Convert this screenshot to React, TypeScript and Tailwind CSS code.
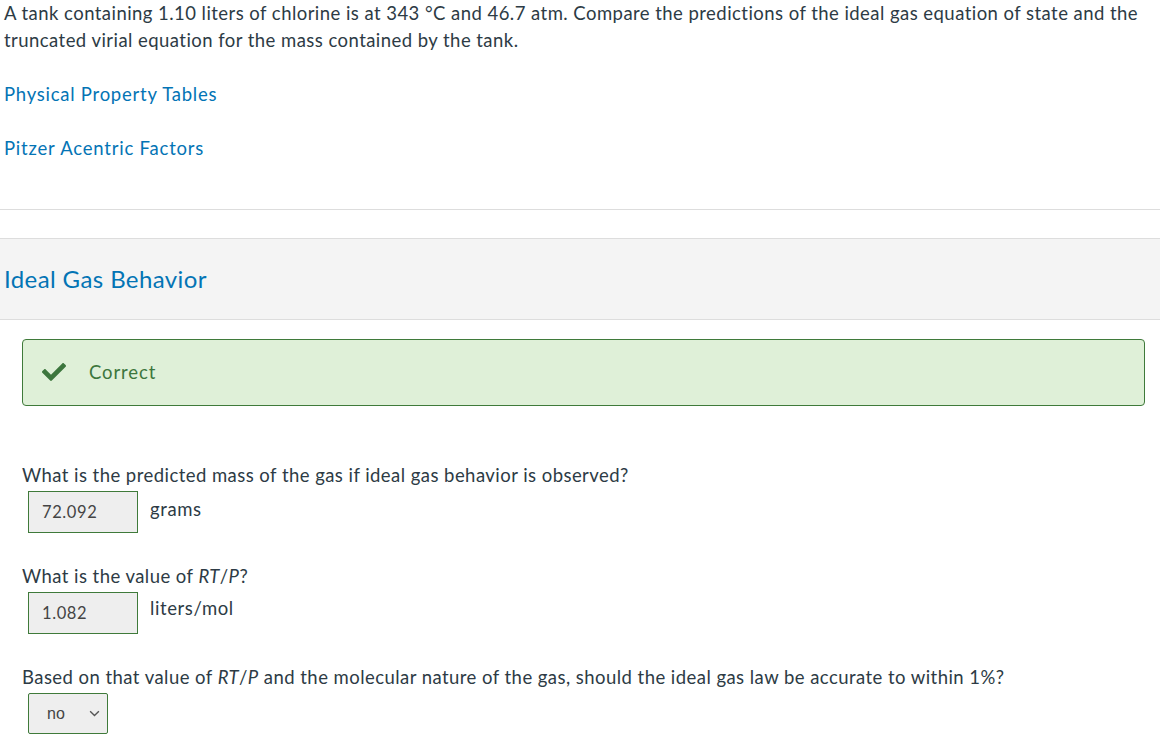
const checkPath =
  'M173.898 439.404l-166.4-166.4c-9.997-9.997-9.997-26.206 0-36.204l36.203-36.204c9.997-9.998 26.207-9.998 36.204 0L192 312.69 432.095 72.596c9.997-9.997 26.207-9.997 36.204 0l36.203 36.204c9.997 9.997 9.997 26.206 0 36.204l-294.4 294.401c-9.998 9.997-26.207 9.997-36.204-.001z';

function AnswerBox({ value }: { value: string }) {
  return (
    <div className="w-[110px] h-[42px] bg-[#eeeeee] border border-[#3f7a3a] flex items-center pl-[13px] text-[16.5px] tracking-[0.6px] text-[#444] font-['Lato']">
      {value}
    </div>
  );
}

export default function App() {
  return (
    <div className="bg-white min-h-[750px] w-[1160px] text-[#2d3b45] text-[18.5px] tracking-[0.45px] font-['Lato','Open_Sans',sans-serif]">
      <p className="pl-[4px] leading-[27px]">
        A tank containing 1.10 liters of chlorine is at 343 °C and 46.7 atm. Compare the predictions of the ideal gas equation of state and the truncated virial equation for the mass contained by the tank.
      </p>

      <a className="block mt-[27px] pl-[4px] leading-[27px] tracking-[0.75px] text-[#0374b5]">
        Physical Property Tables
      </a>
      <a className="block mt-[27px] pl-[4px] leading-[27px] tracking-[0.8px] text-[#0374b5]">
        Pitzer Acentric Factors
      </a>

      <div className="mt-[47px] border-t border-[#dddddd]" />

      <div className="mt-[28px] h-[82px] bg-[#f4f4f4] border-y border-[#dddddd] flex items-center pl-[4px]">
        <h2 className="text-[24px] tracking-[0.4px] text-[#0374b5] leading-[30px]">Ideal Gas Behavior</h2>
      </div>

      <div className="ml-[22px] mt-[19px] w-[1123px] h-[67px] bg-[#dff0d8] border border-[#3f7a3a] rounded-[4px] flex items-center">
        <svg viewBox="0 0 512 512" className="ml-[19px] w-[24px] h-[24px] fill-[#3c763d] -mt-[2px]">
          <path d={checkPath} />
        </svg>
        <span className="ml-[23px] tracking-[0.9px] text-[#3c763d]">Correct</span>
      </div>

      <div className="pl-[22px]">
        <p className="mt-[56px] leading-[27px]">
          What is the predicted mass of the gas if ideal gas behavior is observed?
        </p>
        <div className="mt-[2px] ml-[6px] flex items-start gap-[12px]">
          <AnswerBox value="72.092" />
          <span className="leading-[27px] mt-[5px] tracking-[0.6px]">grams</span>
        </div>

        <p className="mt-[30px] leading-[27px]">
          What is the value of <i>RT</i>/<i>P</i>?
        </p>
        <div className="mt-[2px] ml-[6px] flex items-start gap-[12px]">
          <AnswerBox value="1.082" />
          <span className="leading-[27px] mt-[3px] tracking-[0.6px]">liters/mol</span>
        </div>

        <p className="mt-[30px] leading-[27px]">
          Based on that value of <i>RT</i>/<i>P</i> and the molecular nature of the gas, should the ideal gas law be accurate to within 1%?
        </p>
        <div className="mt-[2px] ml-[6px] w-[80px] h-[41px] bg-[#eeeeee] border border-[#3f7a3a] rounded-[2px] flex items-center justify-between pl-[18px] pr-[7px]">
          <span className="text-[16px] tracking-normal text-[#444] font-['Liberation_Sans',sans-serif]">no</span>
          <svg viewBox="0 0 12 8" className="w-[11px] h-[7px] fill-none stroke-[#555] stroke-[1.6]">
            <path d="M1 1.5 L6 6.2 L11 1.5" />
          </svg>
        </div>
      </div>
    </div>
  );
}
